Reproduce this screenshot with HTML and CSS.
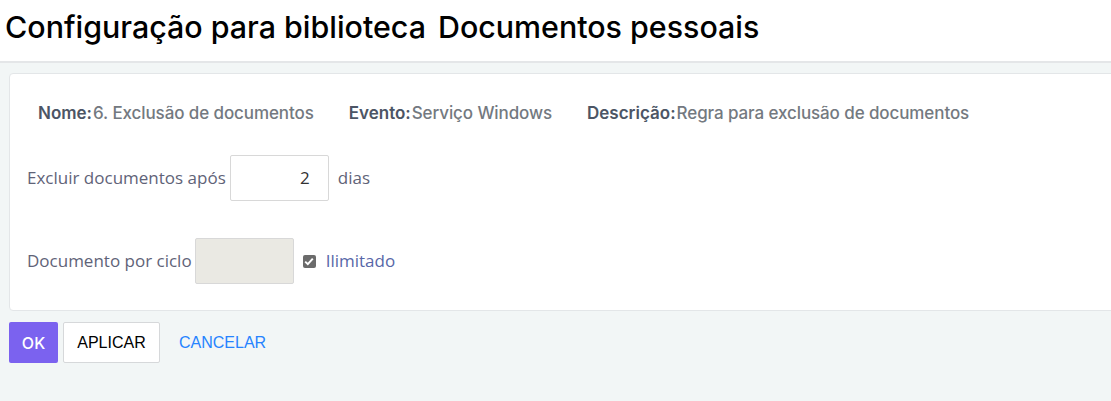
FILE: index.html
```html
<!DOCTYPE html>
<html lang="pt">
<head>
<meta charset="utf-8">
<title>Configuração</title>
<link rel="stylesheet" href="styles.css">
</head>
<body>
<div class="page">
  <header class="header">
    <h1 class="title">Configuração para biblioteca<span class="gap"></span>Documentos pessoais</h1>
  </header>
  <main class="content">
    <section class="card">
      <div class="meta">
        <div class="meta-item"><span class="meta-label">Nome:</span><span class="meta-value">6. Exclusão de documentos</span></div>
        <div class="meta-item"><span class="meta-label">Evento:</span><span class="meta-value">Serviço Windows</span></div>
        <div class="meta-item"><span class="meta-label">Descrição:</span><span class="meta-value">Regra para exclusão de documentos</span></div>
      </div>
      <div class="field-row row-days">
        <span class="label">Excluir documentos após</span>
        <div class="input input-days">2</div>
        <span class="label">dias</span>
      </div>
      <div class="field-row row-cycle">
        <span class="label">Documento por ciclo</span>
        <div class="input input-disabled"></div>
        <span class="checkbox"><svg width="10" height="9" viewBox="0 0 10 9"><path d="M1.2 4.6 L3.8 7.1 L8.8 1.6" fill="none" stroke="#fff" stroke-width="2"/></svg></span>
        <span class="label label-link">Ilimitado</span>
      </div>
    </section>
    <div class="actions">
      <button class="btn btn-ok">OK</button>
      <button class="btn btn-apply">APLICAR</button>
      <button class="btn btn-cancel">CANCELAR</button>
    </div>
  </main>
</div>
</body>
</html>
```
FILE: styles.css
```css
html, body {
  margin: 0;
  padding: 0;
  overflow: hidden;
  background: #f2f6f6;
}
.page {
  width: 1140px;
  min-height: 401px;
  font-family: Inter, "Noto Sans", sans-serif;
}
.header {
  background: #fff;
  height: 61px;
  border-bottom: 2px solid #e4e6e8;
  box-sizing: content-box;
}
.title {
  margin: 0;
  padding: 7px 0 0 5px;
  font-size: 30.4px;
  font-weight: 500;
  color: #000;
  letter-spacing: 0;
  line-height: 40px;
}
.gap {
  display: inline-block;
  width: 12px;
}
.content {
  padding: 10px 0 0 9px;
}
.card {
  background: #fff;
  border: 1px solid #e3e6e8;
  border-radius: 4px;
  height: 238px;
  box-sizing: border-box;
  padding: 0 0 0 17px;
}
.meta {
  display: flex;
  gap: 35px;
  padding: 28px 0 0 11px;
  font-size: 17px;
  line-height: 22px;
}
.meta-label {
  font-weight: 600;
  color: #4c5565;
  margin-right: 1px;
}
.meta-value {
  font-weight: 500;
  color: #737980;
  letter-spacing: -0.1px;
}
.field-row {
  display: flex;
  align-items: center;
  font-family: "Open Sans", sans-serif;
  font-size: 17px;
  color: #5f6378;
}
.row-days {
  margin-top: 31px;
}
.row-cycle {
  margin-top: 37px;
}
.label {
  line-height: 22px;
}
.input {
  box-sizing: border-box;
  height: 46px;
  border: 1px solid #d8d8d8;
  border-radius: 2px;
  width: 99px;
}
.input-days {
  margin: 0 9px 0 4px;
  text-align: right;
  padding-right: 18px;
  line-height: 44px;
  font-size: 17px;
  color: #333;
}
.input-disabled {
  background: #eae9e3;
  margin: 0 9px 0 3px;
}
.checkbox {
  width: 13px;
  height: 13px;
  border-radius: 2px;
  background: #6b6b6b;
  display: flex;
  align-items: center;
  justify-content: center;
  margin-right: 10px;
}
.label-link {
  color: #5867a8;
}
.actions {
  display: flex;
  align-items: center;
  gap: 5px;
  margin-top: 11px;
}
.btn {
  height: 41px;
  font-size: 16px;
  border-radius: 2px;
  box-sizing: border-box;
  cursor: pointer;
}
.btn-ok {
  width: 49px;
  background: #7b62ef;
  color: #fff;
  border: none;
  font-family: Inter, sans-serif;
  font-weight: 500;
}
.btn-apply {
  width: 97px;
  background: #fff;
  border: 1px solid #d6d8da;
  color: #000;
  font-family: "Liberation Sans", sans-serif;
}
.btn-cancel {
  background: none;
  border: none;
  color: #2683ff;
  font-family: "Liberation Sans", sans-serif;
  padding: 0 0 0 14px;
}
```
